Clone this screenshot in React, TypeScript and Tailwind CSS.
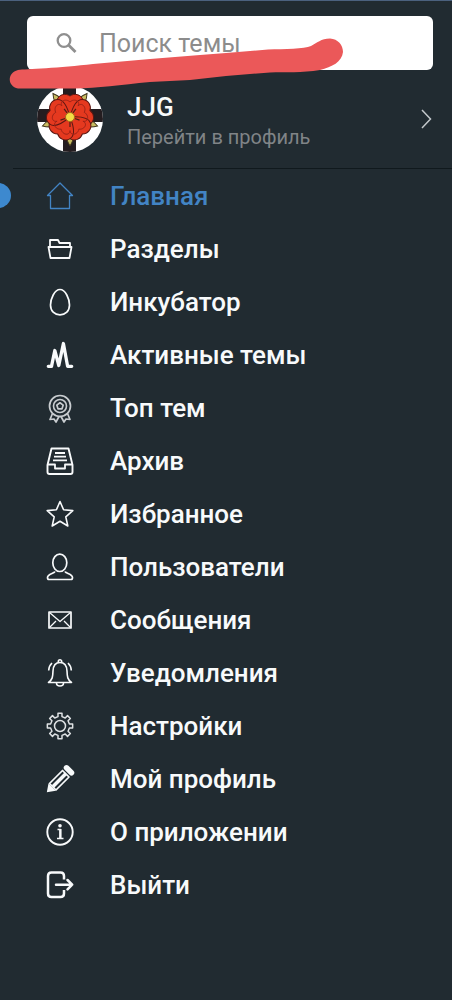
import type { ReactNode } from "react"

// eight-tooth cog outline centred on 14,14
const cogPoints = Array.from({ length: 8 }, (_, i) =>
  [
    [-12, 9.6],
    [-9, 12.8],
    [9, 12.8],
    [12, 9.6],
  ].map(([offset, radius]) => {
    const angle = ((i * 45 + offset) * Math.PI) / 180
    return `${14 + radius * Math.sin(angle)},${14 - radius * Math.cos(angle)}`
  })
)
  .flat()
  .join(" ")

const icons: Record<string, ReactNode> = {
  home: <path d="M14 1 1.5 13.5h3V26.5h19V13.5h3Z" strokeWidth="1.3" />,
  folder: (
    <>
      <path d="M4 12V5h8l1.5 3H24v4" strokeWidth="1.8" />
      <path d="M2.500 12h23l-2 11h-19Z" strokeWidth="1.8" />
    </>
  ),
  egg: <path d="M14 1.500C8.500 1.500 4.500 11 4.500 17s4 9.800 9.500 9.800 9.500-3.800 9.500-9.800S19.500 1.500 14 1.500Z" strokeWidth="1.7" />,
  activity: <path d="M2.300 25.300H5.500L8.800 9.500 12.800 24.500 17.400 2.500 21.600 25.300H25.700" strokeWidth="3.300" strokeLinecap="round" />,
  ribbon: (
    <g stroke="#c9cdd0">
      <circle cx="14" cy="12" r="10.500" strokeWidth="1.700" />
      <circle cx="14" cy="12" r="6.500" strokeWidth="1.600" />
      <path d="m14 8.800 3.200 2.300-1.200 3.700h-4l-1.200-3.700Z" strokeWidth="1.700" />
      <path d="m6.500 19.500-2.500 6 4-.5 2 3 3-5.500h2l3 5.500 2-3 4 .5-2.500-6" strokeWidth="1.700" />
    </g>
  ),
  archive: (
    <>
      <path d="M5.500 1.500h17L26.500 18v7q0 2-2 2h-21q-2 0-2-2v-7Z" strokeWidth="1.900" />
      <path d="M1.500 17.500h7.500v4h10v-4h7.500M9 6h10M8 9.700h12M7 13.400h14" strokeWidth="1.800" />
    </>
  ),
  star: <path d="m14 1.500 3.600 8.300 9.200.8-7 6.200 2 9.200-7.800-4.800-7.800 4.800 2-9.200-7-6.200 9.200-.8Z" strokeWidth="1.600" />,
  user: (
    <>
      <ellipse cx="13.800" cy="9.800" rx="7" ry="8.700" strokeWidth="1.700" />
      <path d="M9 18.500C8.500 20.500 1.500 21 1.500 24.500q0 2 1.500 2h22q1.500 0 1.500-2c0-3.500-7-4-7.500-6" strokeWidth="1.700" />
    </>
  ),
  mail: (
    <>
      <path d="M3 6h22v16H3Z" strokeWidth="1.700" />
      <path d="m3.500 6.500 10.500 9 10.500-9M3.500 21.500 10 15m14.500 6.500L18 15" strokeWidth="1.300" />
    </>
  ),
  bell: (
    <>
      <path d="M14 3.500c-5 0-6.800 4-7 8.500C6.800 18 6.500 20.500 2.500 23.500h23C21.500 20.500 21.200 18 21 12c-.2-4.500-2-8.500-7-8.500Z" strokeWidth="1.600" />
      <path d="M12.300 3.500V2.500a1.700 1.700 0 0 1 3.400 0v1M10.500 24a3.500 3 0 0 0 7 0M6 4c-2 2-3.300 4-3.300 7.500M22 4c2 2 3.300 4 3.300 7.500" strokeWidth="1.600" />
    </>
  ),
  settings: (
    <g stroke="#dfe2e4" strokeWidth="1.500">
      <circle cx="14" cy="14" r="5.500" />
      <polygon points={cogPoints} />
    </g>
  ),
  pencil: (
    <>
      <path d="M.8 27.300 2.500 18.500 9.800 25.800Z" fill="currentColor" stroke="none" />
      <path d="m3.500 18.500 13-13 6.500 6.500-13 13Z" strokeWidth="1.700" />
      <path d="m7 21.500 13-13" strokeWidth="3.500" />
      <path d="m20.500 2.800 5 5" strokeWidth="5.500" strokeLinecap="round" />
    </>
  ),
  info: (
    <>
      <circle cx="14" cy="14" r="12.700" strokeWidth="1.900" />
      <circle cx="14" cy="7.700" r="1.800" fill="currentColor" stroke="none" />
      <path d="M11.500 11.500h3v9M11 20.500h6.500" strokeWidth="1.500" />
      <path d="M14.300 11v9" strokeWidth="2.300" />
    </>
  ),
  logout: (
    <>
      <path d="M18 8.500V5q0-3.500-3.500-3.500H5.500Q2 1.500 2 5v17.500Q2 26 5.500 26h9q3.500 0 3.500-3.500V19" strokeWidth="2.500" />
      <path d="M10 13.700h16M21.500 9l4.700 4.700-4.700 4.700" strokeWidth="2.500" strokeLinecap="round" />
    </>
  ),
}

const menuItems = [
  { icon: "home", title: "Главная", active: true },
  { icon: "folder", title: "Разделы" },
  { icon: "egg", title: "Инкубатор" },
  { icon: "activity", title: "Активные темы" },
  { icon: "ribbon", title: "Топ тем" },
  { icon: "archive", title: "Архив" },
  { icon: "star", title: "Избранное" },
  { icon: "user", title: "Пользователи" },
  { icon: "mail", title: "Сообщения" },
  { icon: "bell", title: "Уведомления" },
  { icon: "settings", title: "Настройки" },
  { icon: "pencil", title: "Мой профиль" },
  { icon: "info", title: "О приложении" },
  { icon: "logout", title: "Выйти" },
]

const rotations = [0, 72, 144, 216, 288]

function Avatar() {
  return (
    <svg viewBox="0 0 66 66" className="size-[66px] shrink-0 rounded-full" aria-hidden="true">
      <rect width="66" height="66" fill="#fff" />
      <path d="M26 0h13v66H26ZM0 23h66v13H0Z" fill="#241d20" />
      {rotations.map((r) => (
        <path key={r} d="M29.500 52q1 4 3.500 8 2.500-4 3.500-8l-3.500-3Z" fill="#c8bd62" stroke="#40361c" strokeWidth="1" transform={`rotate(${r} 33 31)`} />
      ))}
      {rotations.map((r) => (
        <path
          key={r}
          d="M33 31C25 26 18 20 20 14c2-6 9-7 13-4 4-3 11-2 13 4 2 6-5 12-13 17Z"
          fill="#e5391f"
          stroke="#5c1712"
          strokeWidth="1"
          transform={`rotate(${r} 33 31)`}
        />
      ))}
      {rotations.map((r) => (
        <g key={r} transform={`rotate(${r} 33 31)`} fill="none" stroke="#9c2418" strokeWidth=".9">
          <path d="M25 20c-3-5 4-8 8-4 4-4 11-1 8 4" />
          <path d="M33 36v5" stroke="#4a2015" strokeWidth="1.200" />
        </g>
      ))}
      <circle cx="33" cy="31" r="4.500" fill="#f3dc45" stroke="#a66a1b" strokeWidth="1" />
    </svg>
  )
}

export default function App() {
  return (
    <div className="relative min-h-screen overflow-hidden border-t border-[#4b617e] bg-[#212b31] font-['Roboto',sans-serif] text-[#f8fafb]">
      <header className="pt-[15px]">
        <label className="mr-[19px] ml-[27px] flex h-[54px] items-center rounded-md bg-white pl-7">
          <svg viewBox="0 0 24 24" className="size-6 shrink-0" fill="none" stroke="#8f8f8f" strokeWidth="2.300" aria-hidden="true">
            <circle cx="9" cy="9.500" r="6.300" />
            <path d="m13.500 14 7 7" strokeWidth="2.800" />
          </svg>
          <input
            type="text"
            aria-label="Поиск темы"
            placeholder="Поиск темы"
            className="ml-5 w-full min-w-0 bg-transparent pt-0.5 text-[25px] leading-8 text-gray-800 outline-none placeholder:text-[#8c8c8c]"
          />
        </label>

        <a href="#profile" className="ml-[13px] flex h-[99px] items-center border-b border-[#10191d] pr-5 pl-6">
          <Avatar />
          <div className="ml-6 flex flex-1 flex-col pt-1">
            <span className="text-[26px] leading-8 font-medium">JJG</span>
            <span className="text-xl leading-7 text-[#808487]">Перейти в профиль</span>
          </div>
          <svg viewBox="0 0 12 20" className="h-5 w-3" fill="none" stroke="#c3c8cb" strokeWidth="1.500" aria-hidden="true">
            <path d="m2 1 8.500 9L2 19" />
          </svg>
        </a>
      </header>

      <nav>
        <ul>
          {menuItems.map((item) => (
            <li key={item.icon} className="relative">
              {item.active && <span className="absolute top-[14px] -left-[14px] size-[25px] rounded-full bg-[#3d89cf]" />}
              <a href={`#${item.icon}`} className={`flex h-[53px] items-center gap-9 pl-[46px] ${item.active ? "text-[#4284c4]" : ""}`}>
                <svg viewBox="0 0 28 28" className="size-7 shrink-0 overflow-visible" fill="none" stroke="currentColor" strokeLinejoin="round" aria-hidden="true">
                  {icons[item.icon]}
                </svg>
                <span className="text-[26px] leading-8 font-medium">{item.title}</span>
              </a>
            </li>
          ))}
        </ul>
      </nav>

      {/* marker stroke over the search box */}
      <svg viewBox="0 0 360 100" className="pointer-events-none absolute -top-px left-0 h-[100px] w-[360px]" aria-hidden="true">
        <path
          d="M18 70C26 69 60 68 93 64L150 59 200 55 226 53 268 49.500C285 49 304 49 311 46 317 43 321 38.500 330 38.500 338 39 343 45 343 52 342 62 332 67 320 70 302 73 285 72 270 72.500L226 76 190 80 150 82C120 85 98 88 75 88.500L18 88.500C7 86 7 73 18 70Z"
          fill="#eb5859"
        />
      </svg>
    </div>
  )
}
